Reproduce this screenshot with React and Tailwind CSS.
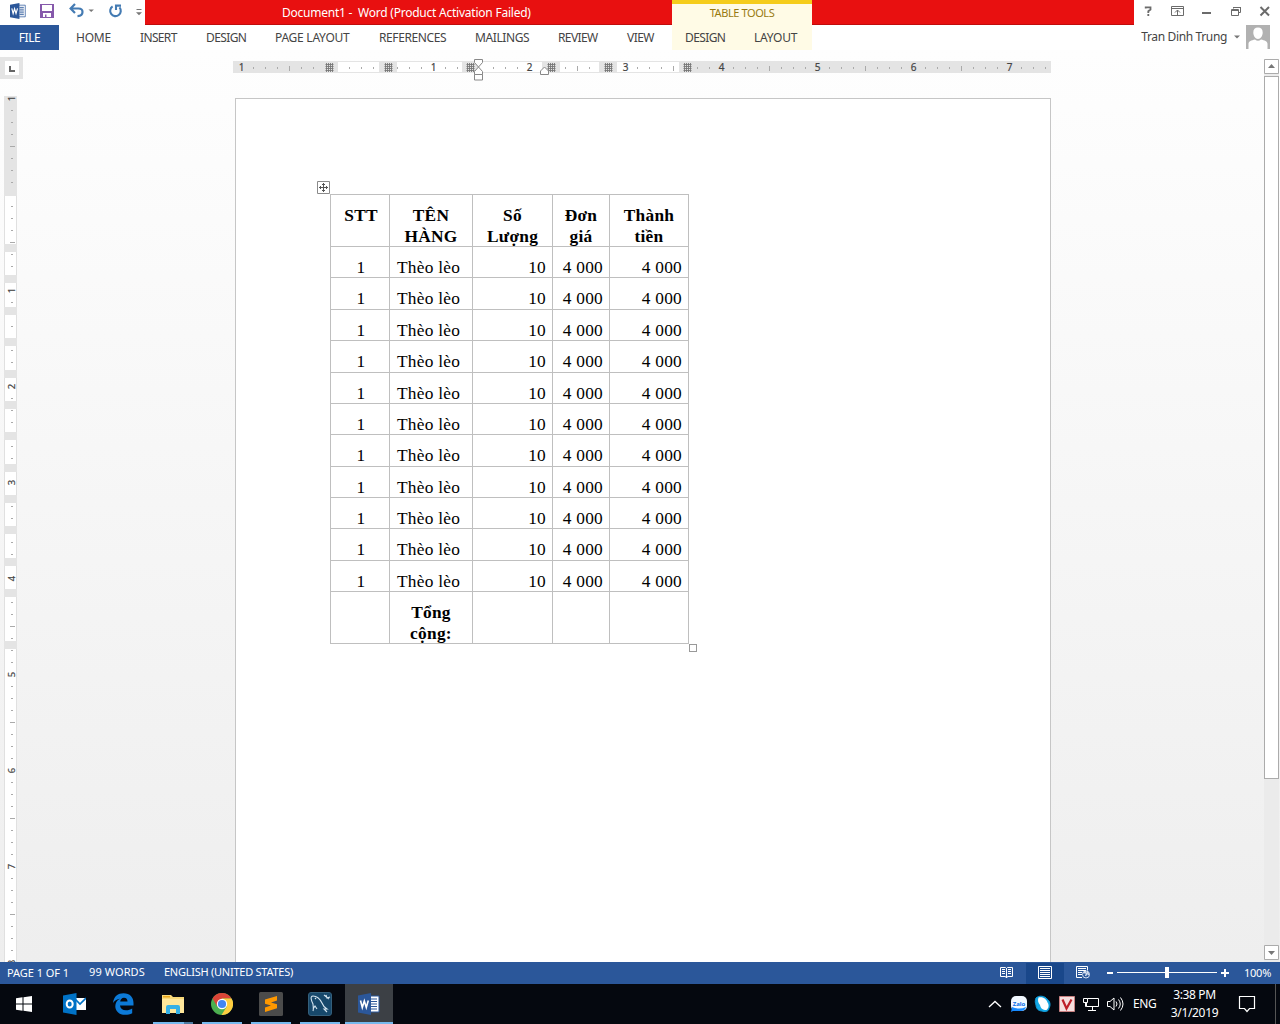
import React from "react";

const TABS = [
  ["HOME", "w-[64px]", "tracking-[-0.2px]"],
  ["INSERT", "w-[66px]", "tracking-[-0.65px]"],
  ["DESIGN", "w-[69px]", "tracking-[-0.6px]"],
  ["PAGE LAYOUT", "w-[104px]", "tracking-[-0.25px]"],
  ["REFERENCES", "w-[96px]", "tracking-[-0.4px]"],
  ["MAILINGS", "w-[83px]", "tracking-[-0.4px]"],
  ["REVIEW", "w-[69px]", "tracking-[-0.6px]"],
  ["VIEW", "w-[45px]", "tracking-[-0.55px]"],
];

const ROW_HEIGHTS = [
  "h-[31px]", "h-[32px]", "h-[31px]", "h-[32px]", "h-[31px]", "h-[31px]",
  "h-[32px]", "h-[31px]", "h-[31px]", "h-[32px]", "h-[31px]",
];

const ROW_LINES = [246, 277, 309, 340, 372, 403, 434, 466, 497, 528, 560, 591, 643];

function WordIcon({ className }) {
  return (
    <svg className={className} viewBox="0 0 22 22">
      <path d="M11 3h10v16H11z" fill="#fff" stroke="#2b579a" strokeWidth="1" />
      <path d="M13 6h6M13 8.5h6M13 11h6M13 13.5h6M13 16h6" stroke="#2b579a" strokeWidth="1.2" />
      <path d="M0 2.5L13 0v22L0 19.5z" fill="#2b579a" />
      <path d="M2.5 7.5L4.3 14.5L6.3 8L8.3 14.5L10.3 7.5" fill="none" stroke="#fff" strokeWidth="1.6" />
    </svg>
  );
}

function TitleBar() {
  return (
    <div className="flex h-[25px] bg-white">
      <div className="flex w-[145px] shrink-0 items-start pl-[10px] pt-[2px]">
        <WordIcon className="mt-px h-4 w-4" />
        <svg className="ml-[14px] mt-[2px] h-[14px] w-[14px]" viewBox="0 0 14 14">
          <path d="M0 0h14v14H0z" fill="#8659ab" />
          <path d="M2 1h10v6H2zM3 9h8v4H6.5v-2.5H5V13H3z" fill="#fff" />
        </svg>
        <svg className="ml-[15px] mt-px h-[15px] w-[28px]" viewBox="0 0 28 15">
          <path d="M2 5.5h7.5c3.5 0 4 2 4 3.5 0 2-1.500 4-5 4.200M6 1L1.600 5.500L6 10" fill="none" stroke="#447bb3" strokeWidth="2.2" />
          <path d="M19.500 6.500h5.400L22.200 9z" fill="#777" />
        </svg>
        <svg className="ml-[11px] mt-[2px] h-[15px] w-[15px]" viewBox="0 0 15 15">
          <path d="M4.6 2.4A5.3 5.3 0 1 0 11.5 3.4M8 6V1.6h5" fill="none" stroke="#447bb3" strokeWidth="2.1" />
        </svg>
        <svg className="ml-[13px] mt-[7px] h-[7px] w-[6px]" viewBox="0 0 6 7">
          <path d="M0.5 0.5h5" stroke="#777" />
          <path d="M0 3.2h6L3 6.200z" fill="#777" />
        </svg>
      </div>
      <div className="flex w-[989px] shrink-0 border-b border-[#c00c0c] bg-[#e81010]">
        <div className="w-[527px] shrink-0 whitespace-pre pl-[137px] pt-[3px] text-[12px] leading-[19px] tracking-[-0.23px] text-white">
          {"Document1 -  Word (Product Activation Failed)"}
        </div>
        <div className="h-[25px] w-[140px] border-t-4 border-[#f5cc1b] bg-[#fffbe6] text-center text-[11px] leading-[18px] tracking-[-0.4px] text-[#987a10]">
          TABLE TOOLS
        </div>
      </div>
      <svg className="h-[25px] w-[146px]" viewBox="1134 0 146 25" fill="none" stroke="#6b6b6b">
        <path d="M1145.7 8.5V7.3h4.8v2.2l-2.2 1.7v1.8M1148.3 14v2" strokeWidth="1.8" />
        <path d="M1171.5 6.5h12v9h-12zM1171.5 8.5h12M1177.5 15v-5M1175 12.5l2.5-2.5l2.5 2.5" />
        <path d="M1202 13h9" strokeWidth="2" />
        <path d="M1233.5 8.5v-1h7v5h-2M1231.5 9.5h7v6h-7zM1231 10.5h8M1233 7.5h8" />
        <path d="M1260.5 7l8.5 8.5M1269 7l-8.5 8.5" strokeWidth="2" />
      </svg>
    </div>
  );
}

function TabRow() {
  return (
    <div className="flex h-[25px] bg-white text-[12px] leading-[25px] text-[#444]">
      <div className="w-[59px] bg-[#2b579a] text-center tracking-[-0.4px] text-white">FILE</div>
      <div className="flex pl-[17px]">
        {TABS.map(([name, width, track]) => (
          <span key={name} className={`${width} ${track} shrink-0 whitespace-nowrap`}>{name}</span>
        ))}
      </div>
      <div className="flex w-[140px] bg-[#fffbe6] pl-[13px]">
        <span className="w-[69px] tracking-[-0.6px]">DESIGN</span>
        <span className="tracking-[-0.25px]">LAYOUT</span>
      </div>
      <div className="flex flex-1 justify-end pr-[10px]">
        <span className="tracking-[-0.36px] leading-[24px]">Tran Dinh Trung</span>
        <svg className="ml-[7px] mt-[10px] h-[4px] w-[6px]" viewBox="0 0 6 4"><path d="M0 0.5h6L3 3.5z" fill="#777" /></svg>
        <svg className="ml-[6px] h-6 w-6" viewBox="0 0 24 24">
          <path d="M0 0h24v24H0z" fill="#b1b1b1" />
          <path d="M7.3 7.5C7.3 4 9 2.5 12 2.5s4.7 1.5 4.7 5c0 3-2 6.5-4.7 6.5S7.3 10.5 7.3 7.5zM2.5 24v-5c0-3 3-3.5 6.5-4.5q3 2.5 6 0c3.5 1 6.5 1.5 6.5 4.5v5z" fill="#fff" />
        </svg>
      </div>
    </div>
  );
}

const H_WHITE = [[338, 379], [397, 462], [479, 542], [560, 599], [617, 679]];
const H_GRIDS = [325, 384, 466, 547, 604, 683];

function HorizontalRuler() {
  const marks = [];
  for (let i = 1; i <= 67; i++) {
    const x = 241 + i * 12;
    const hidden = H_GRIDS.some((g) => x > g - 5 && x < g + 13) || x === 481 || x === 541;
    if (i % 8 === 0 || hidden) continue;
    marks.push(<path key={x} d={i % 8 === 4 ? `M${x + 0.5} 66v5` : `M${x + 0.5} 67v2`} stroke="#aaa" />);
  }
  return (
    <svg className="block h-[26px] w-[830px]" viewBox="229 56 830 26">
      <path d="M233 61h818v12H233z" fill="#e4e4e4" />
      {H_WHITE.map(([a, b]) => <rect key={a} x={a} y="62" width={b - a} height="10" fill="#fff" />)}
      {marks}
      {H_GRIDS.map((g) => (
        <path key={g} d={`M${g + 1.5} 63v9M${g + 3.5} 63v9M${g + 5.5} 63v9M${g + 7.5} 63v9M${g + 0.5} 64.5h8M${g + 0.5} 66.5h8M${g + 0.5} 68.5h8M${g + 0.5} 70.5h8`} stroke="#777" strokeWidth="0.9" />
      ))}
      {[1, null, 1, 2, 3, 4, 5, 6, 7].map((n, i) => n && (
        <text key={i} x={241.5 + i * 96} y="71" textAnchor="middle" fontSize="10" fill="#444" stroke="#444" strokeWidth="0.2">{n}</text>
      ))}
      <g fill="#fff" stroke="#888">
        <path d="M474.5 59.5h8v3l-4 4.5l4 4.5v3h-8v-3l4-4.5l-4-4.5z" />
        <path d="M474.5 74.5h8v5.5h-8z" />
        <path d="M540.5 74.5v-3.5l4-4l4 4v3.5z" />
      </g>
    </svg>
  );
}

function VerticalRuler() {
  const grays = ROW_LINES.map((y) => [y - 2, y + 6]);
  const ticks = [];
  for (let y = 110; y < 960; y += 12) {
    const n = (y - 98) / 12;
    const covered = grays.some(([a, b]) => y >= a - 1 && y <= b);
    if ((n % 8 === 0) || covered) continue;
    ticks.push(<path key={y} d={n % 8 === 4 ? `M10 ${y + 0.5}h5` : `M11 ${y + 0.5}h2`} stroke="#aaa" />);
  }
  return (
    <svg className="block h-[866px] w-[24px]" viewBox="0 96 24 866">
      <path d="M4 96h13v100H4z" fill="#e4e4e4" />
      <path d="M4 196h13v766H4z" fill="#e0e0e0" />
      <path d="M5 196h11v766H5z" fill="#fff" />
      {grays.map(([a, b]) => <rect key={a} x="4" y={a} width="13" height={b - a} fill="#e4e4e4" />)}
      {ticks}
      {[[98, 1], [290, 1], [386, 2], [482, 3], [578, 4], [674, 5], [770, 6], [866, 7], [962, 8]].map(([y, n]) => (
        <text key={y} transform={`translate(15 ${y + 0.5}) rotate(-90)`} textAnchor="middle" fontSize="9.5" fill="#444" stroke="#444" strokeWidth="0.2">{n}</text>
      ))}
    </svg>
  );
}

const CELL = "border-r border-b border-[#bfbfbf] pt-[10px]";

function DocTable() {
  return (
    <div className="grid w-[359px] grid-cols-[60px_83px_80px_57px_79px] border-t border-[#bfbfbf] font-['Liberation_Serif',serif] text-[17.33px] leading-[21px] tracking-[0.27px] text-black">
      <div className={`${CELL} h-[52px] border-l pl-[2px] text-center font-bold`}>STT</div>
      <div className={`${CELL} h-[52px] text-center font-bold`}>TÊN<br />HÀNG</div>
      <div className={`${CELL} h-[52px] text-center font-bold`}>Số<br />Lượng</div>
      <div className={`${CELL} h-[52px] text-center font-bold`}>Đơn<br />giá</div>
      <div className={`${CELL} h-[52px] text-center font-bold`}>Thành<br />tiền</div>
      {ROW_HEIGHTS.map((h, i) => (
        <React.Fragment key={i}>
          <div className={`${CELL} ${h} border-l pl-[2px] text-center`}>1</div>
          <div className={`${CELL} ${h} pl-[7px]`}>Thèo lèo</div>
          <div className={`${CELL} ${h} pr-[6px] text-right`}>10</div>
          <div className={`${CELL} ${h} pr-[6px] text-right`}>4 000</div>
          <div className={`${CELL} ${h} pr-[6px] text-right`}>4 000</div>
        </React.Fragment>
      ))}
      <div className={`${CELL} h-[52px] border-l`} />
      <div className={`${CELL} h-[52px] text-center font-bold`}>Tổng<br />cộng:</div>
      <div className={`${CELL} h-[52px]`} />
      <div className={`${CELL} h-[52px]`} />
      <div className={`${CELL} h-[52px]`} />
    </div>
  );
}

function Workspace() {
  return (
    <div className="flex h-[912px] overflow-hidden bg-gradient-to-b from-[#fefefe] to-[#eeeeee]">
      <div className="w-[229px] shrink-0">
        <div className="mt-[7px] flex h-[22px] w-[23px] items-center justify-center bg-[#e4e4e4]">
          <svg className="h-[14px] w-[14px] bg-white" viewBox="0 0 14 14"><path d="M5 5v5h5" fill="none" stroke="#666" strokeWidth="2" /></svg>
        </div>
        <div className="mt-[17px]"><VerticalRuler /></div>
      </div>
      <div className="w-[830px] shrink-0 pt-[6px]">
        <HorizontalRuler />
        <div className="ml-[6px] mt-[16px] h-[864px] w-[816px] border border-b-0 border-[#c6c6c6] bg-white pl-[81px] pt-[82px]">
          <svg className="block h-[13px] w-[13px]" viewBox="0 0 13 13" fill="none" stroke="#8a8a8a">
            <path d="M0.5 0.5h12v12h-12z" />
            <path d="M6.5 2v9M2 6.5h9M5 3.5h3M5 9.5h3M3.5 5v3M9.5 5v3" stroke="#555" />
          </svg>
          <div className="ml-[13px]"><DocTable /></div>
          <div className="ml-[372px] h-[8px] w-[8px] border border-[#999] bg-white" />
        </div>
      </div>
      <div className="flex-1" />
      <div className="mr-px mt-[9px] flex h-[903px] w-[15px] flex-col items-center bg-[#ebebeb]">
        <svg className="h-[15px] w-[15px]" viewBox="0 0 15 15"><path d="M.5 .5h14v14H.5z" fill="#fff" stroke="#ababab" /><path d="M4 9h7L7.5 5z" fill="#777" /></svg>
        <div className="mt-[2px] h-[703px] w-[15px] border border-[#ababab] bg-white" />
        <svg className="mt-auto mb-[2px] h-[15px] w-[15px]" viewBox="0 0 15 15"><path d="M.5 .5h14v14H.5z" fill="#fff" stroke="#ababab" /><path d="M4 6h7L7.5 10z" fill="#777" /></svg>
      </div>
    </div>
  );
}

function StatusBar() {
  return (
    <div className="flex h-[22px] bg-[#2b579a] text-[11px] leading-[21px] text-white">
      <span className="w-[82px] pl-[7px] leading-[22px] tracking-[-0.05px]">PAGE 1 OF 1</span>
      <span className="w-[75px] pl-[7px] leading-[20px] tracking-[0.1px]">99 WORDS</span>
      <span className="pl-[7px] leading-[20px] tracking-[-0.25px]">ENGLISH (UNITED STATES)</span>
      <div className="flex-1" />
      <svg className="h-[22px] w-[250px]" viewBox="990 962 250 22" fill="none" stroke="#fff">
        <path d="M1026 963h38v21h-38z" fill="#19478a" stroke="none" />
        <path d="M1000.5 967.5h5l1 1l1-1h5v9h-5l-1 1.5l-1-1.5h-5zM1006.5 968v10M1002 969.5h3M1002 971.5h3M1002 973.5h3M1008 969.5h3M1008 971.5h3M1008 973.5h3" />
        <path d="M1038.5 966.5h13v12h-13zM1040 968.5h10M1040 970.5h10M1040 972.5h10M1040 974.5h10M1040 976.5h10" />
        <path d="M1082 977.5h-5.5v-11h11v4M1078 968.5h8M1078 970.5h8M1078 972.5h4M1078 974.5h4" />
        <circle cx="1086" cy="974.5" r="3.5" fill="#2b579a" stroke="#d5dff0" />
        <path d="M1083.500 973l2-1l1 2l-1 2M1087.500 972l1 3" stroke="#d5dff0" strokeWidth="1.5" />
        <path d="M1107 973h6M1221 973h8M1225 969v8" strokeWidth="2" />
        <path d="M1117 972.5h100" />
        <path d="M1165 967h4v11h-4z" fill="#fff" stroke="none" />
      </svg>
      <span className="w-[40px] pl-[4px] leading-[22px] tracking-[-0.25px]">100%</span>
    </div>
  );
}

function Slot({ children, bar, active, grouped, width = "w-[49px]" }) {
  return (
    <div className={`flex h-10 shrink-0 flex-col items-center ${width} ${active ? "bg-[#3c4045]" : ""}`}>
      <div className="flex h-[38px] items-center pt-[2px]">{children}</div>
      {bar && (
        <div className={`flex h-[2px] justify-end bg-[#76b9ed] ${active ? "w-full" : "w-[40px]"}`}>
          {grouped && <div className="w-[9px] bg-[#4d7aa0]" />}
        </div>
      )}
    </div>
  );
}

function TaskBar() {
  return (
    <div className="flex h-10 bg-[#05080f] text-[12px] text-white">
      <Slot width="w-[48px]">
        <svg className="h-4 w-4" viewBox="0 0 16 16"><path d="M0 2.3L6.5 1.3V7.5H0zM7.5 1.2L16 0v7.5H7.5zM0 8.5h6.5v6.2L0 13.7zM7.5 8.5H16V16l-8.5-1.2z" fill="#fff" /></svg>
      </Slot>
      <div className="w-[2px]" />
      <Slot>
        <svg className="h-[22px] w-[23px]" viewBox="0 0 23 22">
          <path d="M12 5h11v12H12z" fill="#fff" /><path d="M12 6l5 5l6-6" fill="none" stroke="#0072c6" strokeWidth="1.7" />
          <path d="M0 2.5L13.5 0v22L0 19.5z" fill="#0072c6" /><ellipse cx="6.7" cy="11" rx="3" ry="3.6" fill="none" stroke="#fff" strokeWidth="2" />
        </svg>
      </Slot>
      <Slot>
        <svg className="h-[22px] w-[21px]" viewBox="0 0 21 22">
          <path d="M0 10C1 3 5 .3 10.5 .3C17 .3 20.5 4.5 20.5 10v2.5H7c.3 3 2.5 4.7 6 4.700c2.500 0 4.500-.8 6.200-1.800v4.800c-2 1.200-4.500 1.600-7 1.600C6 21.800 2.300 18 2.300 13.200c0-3.300 1.700-6 4.700-7.500C4.200 6 1.800 7.500 0 10zM7.200 8.500h7.300c0-2.400-1.200-3.800-3.500-3.800S7.500 6.500 7.200 8.500z" fill="#0c7ad8" />
        </svg>
      </Slot>
      <Slot bar grouped>
        <svg className="h-[19px] w-[22px]" viewBox="0 0 22 19">
          <path d="M0 0h9l2 2h11v16H0z" fill="#f7d879" /><path d="M0 4h22v14H0z" fill="#ffe79b" /><path d="M1 1h7v1.5H1z" fill="#e8a51b" />
          <path d="M4 19v-7q0-2 2-2h10q2 0 2 2v7h-4v-5H8v5z" fill="#35b0e6" />
        </svg>
      </Slot>
      <Slot bar>
        <svg className="h-[22px] w-[22px]" viewBox="0 0 22 22">
          <circle cx="11" cy="11" r="11" fill="#4caf50" />
          <path d="M11 0a11 11 0 0 1 9.5 5.5H11L6.3 13.5L1.5 5.5A11 11 0 0 1 11 0z" fill="#db4437" />
          <path d="M11 5.5h9.5A11 11 0 0 1 10.5 22l5.2-8.3z" fill="#ffcd40" />
          <circle cx="11" cy="11" r="5.2" fill="#fff" /><circle cx="11" cy="11" r="4.1" fill="#4285f4" />
        </svg>
      </Slot>
      <Slot bar>
        <svg className="h-6 w-6" viewBox="0 0 24 24"><rect width="24" height="24" rx="1.5" fill="#4b4b4b" /><path d="M6 7.500l12-3.500v4.500l-6 2l6 1.800v4L6 20V15.500l6-2l-6-1.800z" fill="#ff9800" /></svg>
      </Slot>
      <Slot bar>
        <svg className="h-6 w-6" viewBox="0 0 24 24">
          <rect x=".5" y=".5" width="23" height="23" rx="2.5" fill="#17486b" stroke="#345f7b" />
          <path d="M5 19c1-3 0-4 0-7c-2-4-3-8 0-8c4 0 7 3 9 7c1 3 2 4 5 6l-3 0l3 3M5 17l2-3l2 3M7 6l1 1M16 3l5 4M18 3l1 3l3-1" fill="none" stroke="#d5e5f0" strokeWidth="1.1" />
        </svg>
      </Slot>
      <div className="w-px" />
      <Slot bar active width="w-[48px]"><WordIcon className="h-[22px] w-[22px]" /></Slot>
      <div className="flex-1" />
      <svg className="h-10 w-[142px]" viewBox="984 984 142 40" fill="none" stroke="#fff">
        <path d="M989 1007l6-5.5l6 5.5" strokeWidth="1.3" />
        <rect x="1011" y="996" width="16" height="15" rx="5" fill="#f2f8ff" stroke="none" />
        <path d="M1012 1007q7 3 14 0q-1 4-5 4h-8l-2 1z" fill="#1689ff" stroke="none" />
        <text x="1019" y="1005.5" textAnchor="middle" fontSize="6" fontWeight="700" fill="#086ce8" stroke="none">Zalo</text>
        <path d="M1036 998c3-3 9-2 11 1c3 2 4 6 2 9c0 4-5 4-7 3c-4 0-6-3-6-6c-1-2-1-5 0-7z" fill="#12a7e5" stroke="#119bd9" />
        <path d="M1038.500 997.500c5-1 8 2 9 5c2 3 1 6-1 7.500c-4 0-6-2-6.500-5c-2-2-2.500-5-1.500-7.500z" fill="#fff" stroke="none" />
        <path d="M1059.5 996.5h15v15h-15z" fill="#f5dfdf" stroke="#c98080" />
        <path d="M1062.5 999.5l4 9l5-9" stroke="#bd1e28" strokeWidth="2.2" />
        <path d="M1087.5 998.5h11v8h-12v-4M1092.5 1007v3.5M1088 1010.5h8M1083.5 998.5h4v4h-4zM1085.5 1003v3.5h1" />
        <path d="M1107.5 1001.5h2.5l4-3.5v12l-4-3.5h-2.5zM1116 1001.5q2 2.5 0 5M1118.5 999.5q3.5 4.5 0 9M1120.5 997.5q5 6.5 0 13" />
      </svg>
      <span className="w-[42px] pl-[7px] leading-[39px] tracking-[-0.4px]">ENG</span>
      <div className="w-[53px] pt-[2px] text-center leading-[18px] tracking-[-0.35px]">3:38 PM<br />3/1/2019</div>
      <svg className="h-10 w-[59px]" viewBox="1221 984 59 40" fill="none" stroke="#fff">
        <path d="M1239.5 996.5h15v12h-5l-2.5 3l-2.5-3h-5z" strokeWidth="1.2" /><path d="M1275.5 984v40" stroke="#555" />
      </svg>
    </div>
  );
}

export default function App() {
  return (
    <div className="h-[1024px] w-[1280px] overflow-hidden bg-white font-['Noto_Sans',sans-serif]">
      <TitleBar />
      <TabRow />
      <Workspace />
      <StatusBar />
      <TaskBar />
    </div>
  );
}
